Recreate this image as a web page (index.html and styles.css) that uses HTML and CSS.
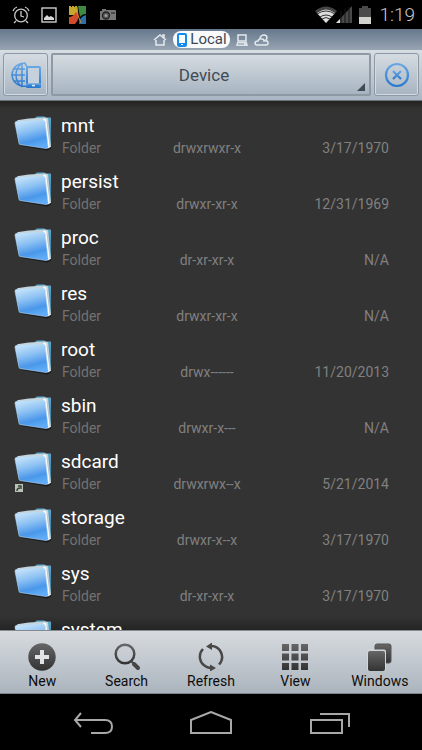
FILE: index.html
```html
<!DOCTYPE html>
<html lang="en">
<head>
<meta charset="utf-8">
<meta name="viewport" content="width=device-width, initial-scale=1">
<title>File manager</title>
<link rel="stylesheet" href="styles.css">
</head>
<body>
<svg class="defs" aria-hidden="true">
  <defs>
    <linearGradient id="front" x1="0.2" y1="0" x2="0.5" y2="1"><stop offset="0" stop-color="#c9e5fa"/><stop offset="0.4" stop-color="#8cc1f3"/><stop offset="0.75" stop-color="#4a97ea"/><stop offset="1" stop-color="#5fadf8"/></linearGradient>
    <linearGradient id="back" x1="0" y1="0" x2="0" y2="1"><stop offset="0" stop-color="#5fa9cb"/><stop offset="1" stop-color="#2f6f98"/></linearGradient>
    <linearGradient id="ink" x1="0" y1="0" x2="0" y2="1"><stop offset="0" stop-color="#666666"/><stop offset="1" stop-color="#333333"/></linearGradient>
    <linearGradient id="blue" x1="0" y1="0" x2="0" y2="1"><stop offset="0" stop-color="#69a7e3"/><stop offset="1" stop-color="#2878d0"/></linearGradient>
    <symbol id="folder" viewBox="0 0 40 38">
      <path d="M6 32l28 5 4-2V26z" fill="#17191b"/>
      <path d="M20 6l2-3q1-1 2-1h7l2 1h4q1 0 1 1v29l-3 1-15-4z" fill="url(#back)"/>
      <path d="M3 6l12-2 17-1q3 0 3 2l3 28-3 2-3-2z" fill="#c5d3dc"/>
      <path d="M30 4l3 1 4 28-2 1z" fill="#ffffff"/>
      <path d="M34 8l3 25" stroke="#b4c0c8" stroke-width="0.8"/>
      <path d="M1 9Q1 7 3 7l27-1q2 0 2 2l3 25q0 2-2 2L7 31q-2 0-2-2z" fill="url(#front)" stroke="#b9dbf5" stroke-width="0.6"/>
    </symbol>
  </defs>
</svg>

<header class="status">
  <div class="status-group">
    <svg viewBox="0 0 18 18" width="18" height="18" fill="none" stroke="#c8c8c8" stroke-width="1.3"><circle cx="9" cy="9.500" r="6.300"/><path d="M9 5v5l3 1M1 5q1-3 4-4M17 5q-1-3-4-4M4 15l-2 2M14 15l2 2"/></svg>
    <svg viewBox="0 0 16 16" width="16" height="16"><rect x="1" y="1" width="14" height="14" fill="none" stroke="#cccccc" stroke-width="1.4"/><path d="M3 13v-2l3-3 2 2 2-1 3 2v2z" fill="#d8d8d8"/></svg>
    <svg viewBox="0 0 20 20" width="20" height="20"><path d="M1 1h2v1h1V1h2v1h1V1h2l1 9H1z" fill="#c6a92c"/><path d="M10 1h8v8q-4 0-6 3z" fill="#3e8a40"/><path d="M1 19v-7q4 0 7-5l3 4q-1 5-4 8z" fill="#cf4b2c"/><path d="M18 10v9h-7q0-7 7-9z" fill="#2d6fa8"/><path d="M9 2q0 9 4 16" fill="none" stroke="#d88a28"/></svg>
    <svg viewBox="0 0 18 14" width="18" height="14"><path d="M1 3h2V1h4v1h9q1 0 1 1v9H1z" fill="#777777"/><circle cx="7" cy="7.500" r="3.500" fill="#555555" stroke="#242424" stroke-width="1.300"/><circle cx="7" cy="7.500" r="1.500" fill="#999999"/><path d="M12 4h4v2h-4z" fill="#4b4b4b"/></svg>
  </div>
  <div class="status-group status-right">
    <svg viewBox="0 0 38 18" width="38" height="18"><path d="M0 5Q11-4 22 5L11 17z" fill="#444444"/><path d="M2 7q9-7 18 0l-9 10z" fill="#dddddd"/><path d="M2 8q9-6 18 0M5 11q6-4 12 0M7 13q4-3 8 0" fill="none" stroke="#333333"/><path d="M21 17L37 0v17z" fill="#494949"/><path d="M21 17l4-4v4z" fill="#dddddd"/><path d="M26 5v12M30 3v14M34 1v16" stroke="#161616"/></svg>
    <svg viewBox="0 0 12 18" width="12" height="18"><path d="M0 2h3V0h6v2h3v9H0z" fill="#4b4b4b"/><path d="M0 11h12v7H0z" fill="#d2d2cf"/></svg>
    <time>1:19</time>
  </div>
</header>

<nav class="tabs" aria-label="Locations">
  <a href="#home" aria-label="Home"><svg viewBox="0 0 14 12" width="14" height="12" fill="none" stroke="#e4e9ee" stroke-width="1.500"><path d="M1 6l6-5 6 5M3 6v5h8V6M10 2V1h1v3"/></svg></a>
  <a class="current" href="#local"><svg viewBox="0 0 10 14" width="10" height="14"><rect x="1" y="1" width="8" height="12" rx="1" fill="#f8fcff" stroke="#168bee" stroke-width="2"/><path d="M1 10h8v3H1z" fill="#168bee"/><path d="M4 11h2v1H4z" fill="#ffffff"/></svg><span>Local</span></a>
  <a href="#network" aria-label="Network"><svg viewBox="0 0 12 12" width="12" height="12"><rect x="2" y="1" width="8" height="6" fill="none" stroke="#e4e9ee" stroke-width="1.500"/><path d="M1 8h10l1 4H0z" fill="#dce2e8"/><path d="M2 10h6" stroke="#8997a7"/></svg></a>
  <a href="#cloud" aria-label="Cloud"><svg viewBox="0 0 15 12" width="15" height="12" fill="none" stroke="#e4e9ee" stroke-width="1.500"><path d="M3 11Q1 11 1 9t3-2q1-3 4-2 2 0 2 2 4-1 4 2 0 2-2 2zM6 4q1-3 4-3t3 3q0 1-2 3"/></svg></a>
</nav>

<div class="toolbar">
  <button class="tool side" type="button" aria-label="Switch location">
    <svg viewBox="0 0 32 28" width="32" height="28" fill="none" stroke="url(#blue)" stroke-width="1.500"><path d="M16 2.500A11.500 11.500 0 1 0 16 25M12 2v24M1 14h14M3 8h12M3 20h12M12 2q-6 5-6 12t6 12M14 2q2 1 3 4"/><rect x="17" y="6" width="13" height="20" rx="1" fill="#c5d1dc" stroke-width="2"/><path d="M17 23h13v3H17z" fill="#2f80d6"/><path d="M22 24.500h3" stroke="#dce8f2"/></svg>
  </button>
  <button class="tool path" type="button">Device</button>
  <button class="tool side" type="button" aria-label="Close">
    <svg viewBox="0 0 26 26" width="26" height="26" fill="none" stroke="url(#blue)"><circle cx="13" cy="13" r="11" stroke-width="2.200"/><path d="M9 9l8 8M17 9l-8 8" stroke-width="2.200"/></svg>
  </button>
</div>

<main class="list-area">
  <ul class="list">
    <li class="row"><svg class="folder" viewBox="0 0 40 38"><use href="#folder"/></svg><h2>mnt</h2><span class="type">Folder</span><span class="perm">drwxrwxr-x</span><span class="date">3/17/1970</span></li>
    <li class="row"><svg class="folder" viewBox="0 0 40 38"><use href="#folder"/></svg><h2>persist</h2><span class="type">Folder</span><span class="perm">drwxr-xr-x</span><span class="date">12/31/1969</span></li>
    <li class="row"><svg class="folder" viewBox="0 0 40 38"><use href="#folder"/></svg><h2>proc</h2><span class="type">Folder</span><span class="perm">dr-xr-xr-x</span><span class="date">N/A</span></li>
    <li class="row"><svg class="folder" viewBox="0 0 40 38"><use href="#folder"/></svg><h2>res</h2><span class="type">Folder</span><span class="perm">drwxr-xr-x</span><span class="date">N/A</span></li>
    <li class="row"><svg class="folder" viewBox="0 0 40 38"><use href="#folder"/></svg><h2>root</h2><span class="type">Folder</span><span class="perm">drwx------</span><span class="date">11/20/2013</span></li>
    <li class="row"><svg class="folder" viewBox="0 0 40 38"><use href="#folder"/></svg><h2>sbin</h2><span class="type">Folder</span><span class="perm">drwxr-x---</span><span class="date">N/A</span></li>
    <li class="row"><svg class="folder" viewBox="0 0 40 38"><use href="#folder"/></svg><svg class="link-badge" viewBox="0 0 8 8"><path d="M0 0h8v8H0z" fill="#b9c2b5"/><path d="M2 7q0-3 3-3M3 2h3v3" fill="none" stroke="#35433a" stroke-width="1.400"/></svg><h2>sdcard</h2><span class="type">Folder</span><span class="perm">drwxrwx--x</span><span class="date">5/21/2014</span></li>
    <li class="row"><svg class="folder" viewBox="0 0 40 38"><use href="#folder"/></svg><h2>storage</h2><span class="type">Folder</span><span class="perm">drwxr-x--x</span><span class="date">3/17/1970</span></li>
    <li class="row"><svg class="folder" viewBox="0 0 40 38"><use href="#folder"/></svg><h2>sys</h2><span class="type">Folder</span><span class="perm">dr-xr-xr-x</span><span class="date">3/17/1970</span></li>
    <li class="row"><svg class="folder" viewBox="0 0 40 38"><use href="#folder"/></svg><h2>system</h2></li>
  </ul>
</main>

<div class="actions">
  <button type="button"><svg viewBox="0 0 28 28" width="28" height="28"><circle cx="14" cy="14" r="13.700" fill="url(#ink)"/><path d="M12 7h4v5h5v4h-5v5h-4v-5H7v-4h5z" fill="#e1e4e7"/></svg>New</button>
  <button type="button"><svg viewBox="0 0 28 28" width="28" height="28" fill="none" stroke="#444444"><circle cx="12" cy="11" r="9.300" stroke="url(#ink)" stroke-width="2.500"/><path d="M18 18l3 3" stroke-width="2"/><path d="M21 21l4 4" stroke-width="4" stroke-linecap="round"/></svg>Search</button>
  <button type="button"><svg viewBox="0 0 28 28" width="28" height="28"><path d="M9 23.500A11 11 0 0 1 6 6M13 3A11 11 0 0 1 22 21.500M8 23A11 11 0 0 0 15 25" fill="none" stroke="#484848" stroke-width="2.500"/><path d="M9 3.500l6-4v7.500zM19 25l-6-3.500v7z" fill="#484848"/></svg>Refresh</button>
  <button type="button"><svg viewBox="0 0 28 28" width="28" height="28"><path d="M1 1h7v7H1zM10.500 1h7v7h-7zM20 1h7v7h-7zM1 10.500h7v7H1zM10.500 10.500h7v7h-7zM20 10.500h7v7h-7zM1 20h7v7H1zM10.500 20h7v7h-7zM20 20h7v7h-7z" fill="url(#ink)"/></svg>View</button>
  <button type="button"><svg viewBox="0 0 28 28" width="28" height="28"><rect x="9" y="1" width="16" height="19" rx="2" fill="url(#ink)" stroke="#555555"/><rect x="1" y="6.500" width="19" height="21.500" rx="2" fill="#d2d7dc"/><rect x="2" y="8" width="17" height="20" rx="2" fill="url(#ink)"/></svg>Windows</button>
</div>

<nav class="system" aria-label="System">
  <button type="button" aria-label="Back"><svg viewBox="0 0 44 26" width="44" height="26" fill="none" stroke="#a8a8a8" stroke-width="2"><path d="M10 2L4 9l6 7M4 9h30q7 0 7 6.500T34 22H20"/></svg></button>
  <button type="button" aria-label="Home"><svg viewBox="0 0 44 26" width="44" height="26" fill="none" stroke="#a8a8a8" stroke-width="2"><path d="M2 22V9L22 1l20 8v13z"/></svg></button>
  <button type="button" aria-label="Recent apps"><svg viewBox="0 0 44 26" width="44" height="26" fill="none" stroke="#a8a8a8" stroke-width="2"><path d="M4 9h31v13H4zM13 3h29v13"/></svg></button>
</nav>
</body>
</html>
```
FILE: styles.css
```css
* {
  box-sizing: border-box;
}

body {
  margin: 0;
  height: 100vh;
  display: flex;
  flex-direction: column;
  overflow: hidden;
  background: #000;
  color: #fff;
  font-family: Roboto, "Noto Sans", sans-serif;
  font-size: 14px;
}

button {
  margin: 0;
  padding: 0;
  border: 0;
  background: none;
  color: inherit;
  font: inherit;
}

svg {
  display: block;
  flex: none;
}

.defs {
  position: absolute;
  width: 0;
  height: 0;
}

.status {
  flex: none;
  display: flex;
  align-items: center;
  justify-content: space-between;
  height: 29px;
  padding: 0 7px 0 12px;
}

.status-group {
  display: flex;
  align-items: center;
  gap: 11px;
}

.status-right {
  gap: 6px;
}

.status time {
  margin-left: 2px;
  color: #c8c8c8;
  font-size: 19px;
  font-weight: 300;
  line-height: 29px;
}

.tabs {
  flex: none;
  display: flex;
  align-items: center;
  justify-content: center;
  gap: 6px;
  height: 21px;
  background: linear-gradient(#66788c, #97a4b2);
}

.current {
  display: flex;
  align-items: center;
  gap: 3px;
  height: 17px;
  padding: 0 3px 0 4px;
  border-radius: 8px;
  background: #f8fafc;
  color: #3f4850;
  font-size: 15px;
  line-height: 17px;
  text-decoration: none;
}

.toolbar {
  flex: none;
  display: flex;
  gap: 3px;
  height: 51px;
  padding: 3px 3px 4px;
  border-bottom: 1px solid #6c7379;
  background: linear-gradient(#d6dde3, #aab6c3);
}

.tool {
  display: flex;
  align-items: center;
  justify-content: center;
  border: 1px solid #8d98a4;
  border-radius: 3px;
  background: linear-gradient(#d5dce1, #a7b4c1);
  box-shadow: inset 0 0 0 1px #d3dbe2;
}

.side {
  flex: none;
  width: 45px;
}

.path {
  flex: 1;
  position: relative;
  padding-right: 14px;
  border: 2px solid #8e99a4;
  border-radius: 2px;
  box-shadow: none;
  color: #424b54;
  font-size: 17px;
}

.path::after {
  content: "";
  position: absolute;
  right: 4px;
  bottom: 3px;
  border-left: 8px solid transparent;
  border-bottom: 8px solid #424b54;
}

.list-area {
  flex: 1;
  min-height: 0;
  overflow: hidden;
  background: linear-gradient(#252321, #333 8px, #333 calc(100% - 14px), #242424);
}

.list {
  margin: 0;
  padding: 13px 33px 0 14px;
  list-style: none;
}

.row {
  position: relative;
  display: grid;
  grid-template-columns: 39px 83px 1fr 111px;
  grid-template-rows: 24px 20px;
  height: 56px;
}

.folder {
  grid-row: 1 / 3;
  width: 39px;
  height: 38px;
}

.link-badge {
  position: absolute;
  left: 1px;
  top: 34px;
  width: 8px;
  height: 8px;
}

.row h2 {
  grid-column: 2 / 5;
  margin: 0;
  padding-left: 8px;
  font-size: 19px;
  font-weight: 400;
  line-height: 24px;
}

.row span {
  grid-row: 2;
  color: #808080;
  line-height: 20px;
}

.row .type {
  grid-column: 2;
  padding-left: 9px;
  color: #727272;
}

.perm {
  text-align: center;
}

.date {
  text-align: right;
}

.actions {
  flex: none;
  display: grid;
  grid-template-columns: repeat(5, 1fr);
  height: 64px;
  border-top: 1px solid #85898d;
  border-bottom: 1px solid #7d858d;
  background: linear-gradient(#d7dbdf, #abb4be);
}

.actions button {
  display: flex;
  flex-direction: column;
  align-items: center;
  gap: 1px;
  padding-top: 12px;
  color: #0c0c0c;
  line-height: 18px;
}

.system {
  flex: none;
  display: flex;
  justify-content: center;
  gap: 74px;
  height: 56px;
  padding-top: 17px;
}

.system button {
  display: flex;
  align-items: flex-start;
}
```
